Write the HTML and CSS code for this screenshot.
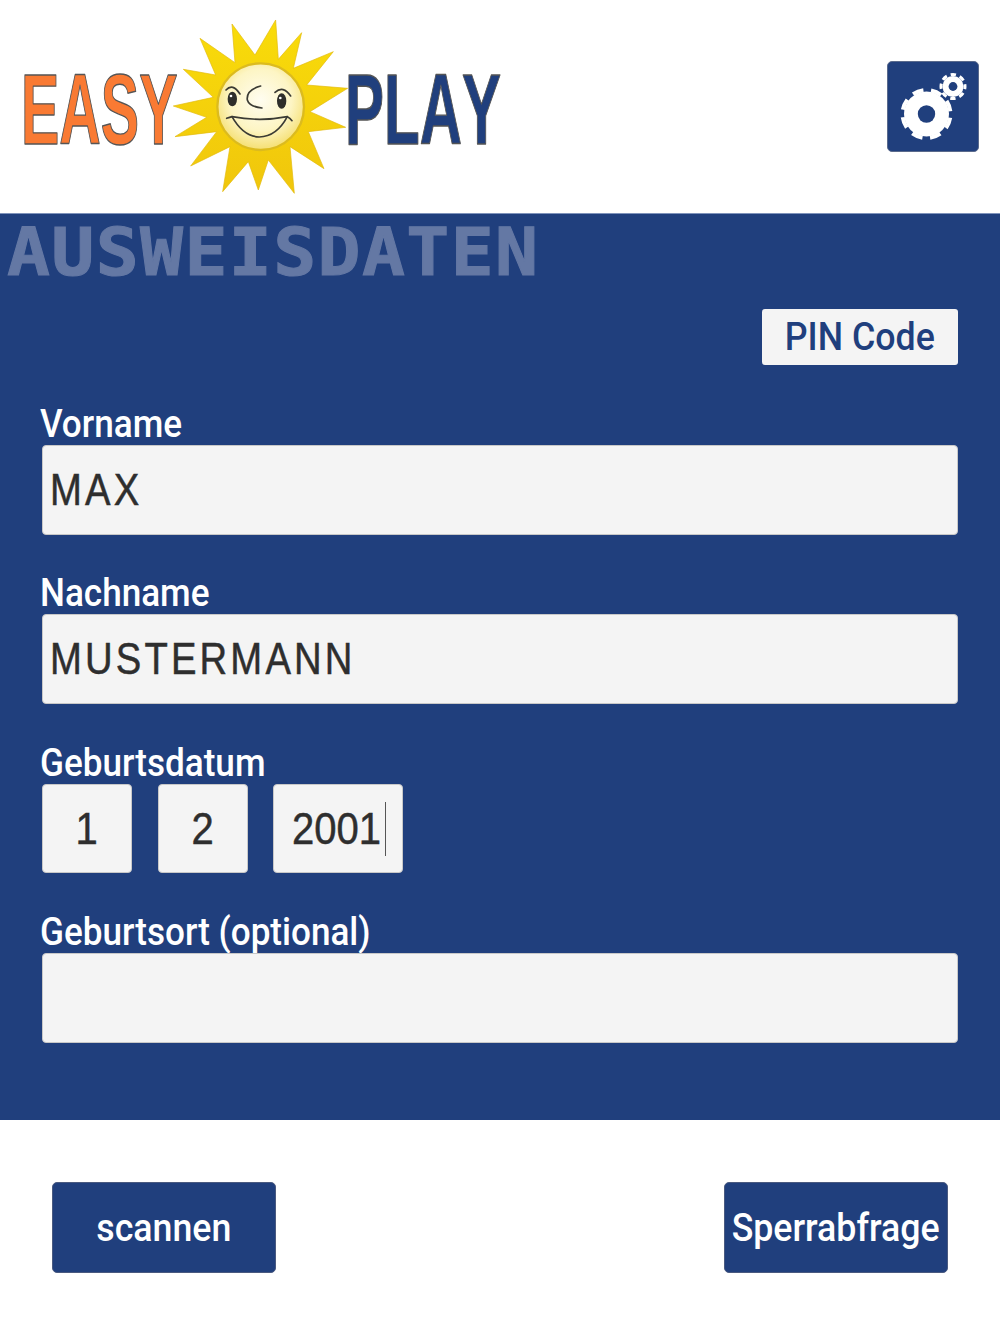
FILE: index.html
```html
<!DOCTYPE html>
<html lang="de">
<head>
    <meta charset="UTF-8">
    <meta name="viewport" content="width=device-width, initial-scale=1.0">
    <title>Easy Play - Ausweisdaten</title>
    <link rel="stylesheet" href="styles.css">
</head>
<body>
    <header class="top">
        <svg class="logo" width="510" height="213" viewBox="0 0 510 213">
            <defs>
                <radialGradient id="face" cx="50%" cy="42%" r="55%">
                    <stop offset="0" stop-color="#fffdf0"/>
                    <stop offset="0.65" stop-color="#fdf5c4"/>
                    <stop offset="1" stop-color="#f6e27c"/>
                </radialGradient>
                <linearGradient id="rays" x1="0" y1="0" x2="0" y2="1">
                    <stop offset="0" stop-color="#f9dc0a"/>
                    <stop offset="1" stop-color="#f0c60c"/>
                </linearGradient>
            </defs>
            <text class="logo-text easy" transform="translate(21 144) scale(0.575 1)">EASY</text>
            <text class="logo-text play" transform="translate(345 144) scale(0.585 1)">PLAY</text>
            <g transform="translate(170 10) scale(0.3333)">
                <polygon fill="url(#rays)" stroke="#e2b90c" stroke-width="2" points="317,30 325,148 395,68 370,175 490,125 410,225 533,235 420,305 527,352 415,365 462,476 360,410 373,550 295,450 265,540 235,455 158,545 180,410 62,468 140,365 15,380 110,322 10,288 130,262 40,178 137,195 90,85 195,158 186,42 255,135"/>
                <circle cx="272" cy="290" r="130" fill="url(#face)" stroke="#dcbb1e" stroke-width="7"/>
                <g fill="none" stroke="#3b3b34" stroke-width="5" stroke-linecap="round">
                    <path d="M168 240 Q188 218 210 252"/>
                    <path d="M315 247 Q340 225 362 258"/>
                    <path d="M272 228 Q228 240 232 270 Q238 290 276 294"/>
                    <path d="M170 325 Q180 322 186 320 Q270 336 352 320 Q360 324 366 332"/>
                    <path d="M186 320 Q220 380 268 381 Q320 380 352 320"/>
                </g>
                <ellipse cx="187" cy="267" rx="14" ry="22" fill="#2e2e2a"/>
                <ellipse cx="335" cy="273" rx="14" ry="23" fill="#2e2e2a"/>
                <circle cx="183" cy="258" r="4" fill="#fff"/>
                <circle cx="331" cy="264" r="4" fill="#fff"/>
            </g>
        </svg>
        <button class="gear-btn" aria-label="Einstellungen">
            <svg width="90" height="89" viewBox="0 0 90 89">
                <circle cx="38.5" cy="52" r="22.5" fill="#fff"/>
                <circle cx="38.5" cy="52" r="24" fill="none" stroke="#fff" stroke-width="4" stroke-dasharray="11 7.85" stroke-dashoffset="-3.92"/>
                <circle cx="38.5" cy="52" r="8.7" fill="#203f7d"/>
                <circle cx="65" cy="24.5" r="10.5" fill="#fff"/>
                <circle cx="65" cy="24.5" r="12" fill="none" stroke="#fff" stroke-width="3" stroke-dasharray="5.4 4.02" stroke-dashoffset="2.7"/>
                <circle cx="65" cy="24.5" r="4.4" fill="#203f7d"/>
            </svg>
        </button>
    </header>

    <main class="panel">
        <h1 class="panel-title"><span class="title-text">AUSWEISDATEN</span></h1>
        <div class="pin-row">
            <button class="pin-btn"><span class="squeeze">PIN Code</span></button>
        </div>

        <div class="group">
            <div class="label"><span class="squeeze">Vorname</span></div>
            <div class="field"><span class="squeeze">MAX</span></div>
        </div>
        <div class="group">
            <div class="label"><span class="squeeze">Nachname</span></div>
            <div class="field"><span class="squeeze">MUSTERMANN</span></div>
        </div>
        <div class="group">
            <div class="label"><span class="squeeze">Geburtsdatum</span></div>
            <div class="date-row">
                <div class="field date"><span class="squeeze">1</span></div>
                <div class="field date"><span class="squeeze">2</span></div>
                <div class="field date year"><span class="squeeze">2001</span><span class="caret"></span></div>
            </div>
        </div>
        <div class="group">
            <div class="label"><span class="squeeze">Geburtsort (optional)</span></div>
            <div class="field"></div>
        </div>
    </main>

    <footer class="bottom">
        <button class="action"><span class="squeeze">scannen</span></button>
        <button class="action"><span class="squeeze">Sperrabfrage</span></button>
    </footer>
</body>
</html>
```

FILE: styles.css
```css
body {
    margin: 0;
    background-color: white;
    font-family: 'Roboto', 'Liberation Sans', sans-serif;
}

button {
    font-family: inherit;
    padding: 0;
    cursor: pointer;
}

.top {
    display: flex;
    justify-content: space-between;
    align-items: center;
    height: 213px;
    padding-right: 21px;
}

.logo {
    display: block;
}

.logo-text {
    font-family: 'Liberation Sans', sans-serif;
    font-weight: bold;
    font-size: 100px;
    font-kerning: none;
    stroke: #555;
    stroke-width: 1.4;
    stroke-linejoin: round;
}

.easy {
    fill: #f97a33;
}

.play {
    fill: #203f7d;
}

.gear-btn {
    width: 92px;
    height: 91px;
    background-color: #203f7d;
    border: 1px solid #5a6a8c;
    border-radius: 5px;
}

.gear-btn svg {
    display: block;
}

.panel {
    background-color: #203f7d;
    box-shadow: inset 0 1px 0 #7f93bb;
    height: 907px;
    box-sizing: border-box;
}

.panel-title {
    margin: 0 0 20px 7px;
    height: 76px;
    font-family: 'DejaVu Sans Mono', monospace;
    font-size: 65px;
    line-height: 80px;
    letter-spacing: 1.2px;
    font-weight: bold;
    color: #6478a4;
    white-space: nowrap;
}

.title-text {
    display: inline-block;
    transform: scaleX(1.1);
    transform-origin: left center;
    -webkit-text-stroke: 1px #6478a4;
}

.pin-row {
    display: flex;
    justify-content: flex-end;
    padding-right: 42px;
    margin-bottom: 41px;
}

.pin-btn {
    width: 196px;
    height: 56px;
    background-color: #f4f4f4;
    border: none;
    border-radius: 3px;
    color: #203f7d;
    font-size: 38px;
    font-weight: 500;
}

.squeeze {
    display: inline-block;
    transform: scaleX(0.94);
}

.group {
    margin-bottom: 40.9px;
    padding: 0 42px;
}

.label {
    height: 39px;
    margin-left: -2px;
    color: white;
    font-size: 39px;
    font-weight: 500;
    line-height: 36px;
    white-space: nowrap;
}

.label .squeeze {
    transform: scaleX(0.9);
    transform-origin: left center;
}

.field {
    position: relative;
    box-sizing: border-box;
    display: flex;
    align-items: center;
    height: 89.5px;
    padding-left: 7px;
    background-color: #f4f4f4;
    border: 1px solid #c8c8c8;
    border-radius: 4px;
    color: #2e2e2e;
    font-family: 'Liberation Sans', sans-serif;
    font-size: 45px;
    letter-spacing: 3.7px;
    -webkit-text-stroke: 0.5px #2e2e2e;
}

.field .squeeze {
    transform: scaleX(0.85);
    transform-origin: left center;
}

.date-row {
    display: flex;
    gap: 25.5px;
}

.date {
    width: 90px;
    padding-left: 0;
    justify-content: center;
    letter-spacing: 0;
}

.date .squeeze {
    transform: scaleX(0.89);
    transform-origin: center;
}

.year {
    width: 130px;
    padding-left: 18px;
    justify-content: flex-start;
}

.year .squeeze {
    transform-origin: left center;
}

.caret {
    position: absolute;
    top: 17px;
    left: 111px;
    width: 1px;
    height: 54px;
    background-color: #555;
}

.bottom {
    display: flex;
    justify-content: space-between;
    padding: 62px 52px 0;
}

.action {
    width: 224px;
    height: 91px;
    background-color: #203f7d;
    border: 1px solid #4a5a80;
    border-radius: 5px;
    color: white;
    font-size: 38px;
    font-weight: 500;
    white-space: nowrap;
}
```
